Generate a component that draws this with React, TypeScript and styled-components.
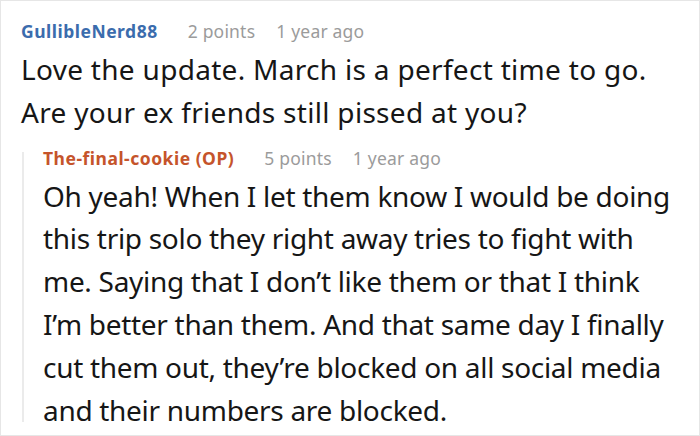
import styled, { createGlobalStyle } from "styled-components";

const Global = createGlobalStyle`
  html, body {
    margin: 0;
    padding: 0;
    background: #fff;
  }
  body {
    font-family: "Noto Sans", "Open Sans", sans-serif;
  }
`;

const Frame = styled.div`
  box-sizing: border-box;
  width: 700px;
  height: 436px;
  border: 1px solid #e6e6e6;
  overflow: hidden;
  padding: 18px 0 0 20px;
`;

const Comment = styled.div`
  display: flex;
  flex-direction: column;
`;

const Meta = styled.div`
  display: flex;
  align-items: baseline;
  gap: 21px;
  height: 24px;
  line-height: 24px;
  margin-bottom: 5px;
`;

const Author = styled.span<{ $op?: boolean }>`
  font-weight: 700;
  font-size: 17.5px;
  letter-spacing: 0.5px;
  margin-right: 9px;
  color: ${(p) => (p.$op ? "#c5542b" : "#3b6cad")};
`;

const Info = styled.span`
  font-size: 17.5px;
  letter-spacing: 0.2px;
  color: #9b9b9b;
`;

const Body = styled.p<{ $tight?: boolean }>`
  margin: 0;
  font-size: 28px;
  letter-spacing: ${(p) => (p.$tight ? "-0.3px" : "0.3px")};
  line-height: 42.8px;
  white-space: nowrap;
  color: #161616;
`;

const Reply = styled.div`
  position: relative;
  margin-top: 12px;
  padding-left: 22px;

  &::before {
    content: "";
    position: absolute;
    left: 1px;
    top: 6px;
    bottom: 9px;
    width: 2px;
    background: #ebebeb;
  }
`;

type Props = {
  author: string;
  points: number;
  op?: boolean;
};

function Header({ author, points, op }: Props) {
  return (
    <Meta>
      <Author $op={op}>{author}</Author>
      <Info>{points} points</Info>
      <Info>1 year ago</Info>
    </Meta>
  );
}

const firstLines = [
  "Love the update. March is a perfect time to go.",
  "Are your ex friends still pissed at you?",
];

const replyLines = [
  "Oh yeah! When I let them know I would be doing",
  "this trip solo they right away tries to fight with",
  "me. Saying that I don’t like them or that I think",
  "I’m better than them. And that same day I finally",
  "cut them out, they’re blocked on all social media",
  "and their numbers are blocked.",
];

function Lines({ lines, tight }: { lines: string[]; tight?: boolean }) {
  return (
    <Body $tight={tight}>
      {lines.map((line, i) => (
        <span key={i}>
          {line}
          {i < lines.length - 1 && <br />}
        </span>
      ))}
    </Body>
  );
}

export default function App() {
  return (
    <>
      <Global />
      <Frame>
        <Comment>
          <Header author="GullibleNerd88" points={2} />
          <Lines lines={firstLines} />
        </Comment>
        <Reply>
          <Comment>
            <Header author="The-final-cookie (OP)" points={5} op />
            <Lines lines={replyLines} tight />
          </Comment>
        </Reply>
      </Frame>
    </>
  );
}
